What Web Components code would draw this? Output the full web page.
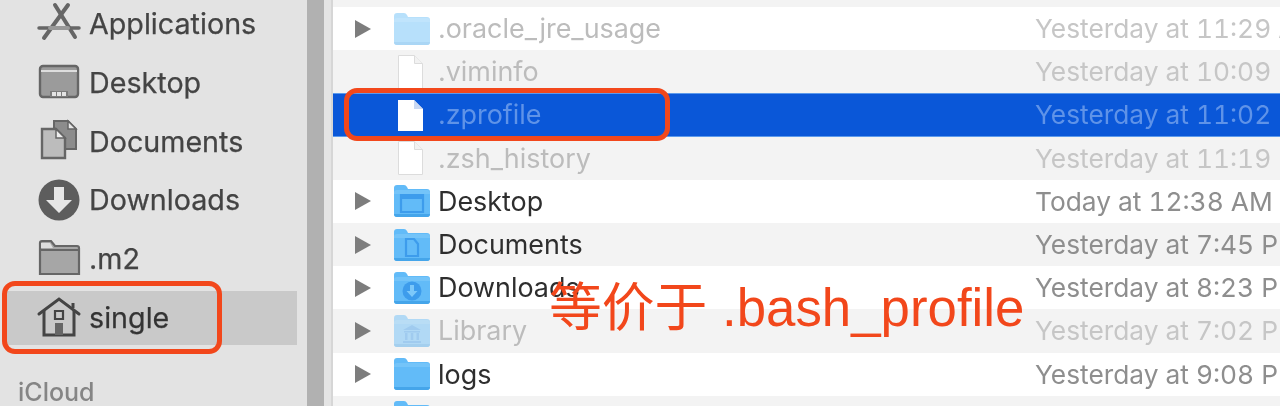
<!DOCTYPE html>
<html>
<head>
<meta charset="utf-8">
<style>
  html, body { margin: 0; height: 406px; overflow: hidden; background: #fff; }
</style>
</head>
<body>
<finder-window>
  <finder-sidebar slot="side">
    <side-item icon="apps">Applications</side-item>
    <side-item icon="desktop">Desktop</side-item>
    <side-item icon="docs">Documents</side-item>
    <side-item icon="down">Downloads</side-item>
    <side-item icon="folder">.m2</side-item>
    <side-item icon="home" selected>single</side-item>
    <span slot="section">iCloud</span>
  </finder-sidebar>
  <file-list slot="list">
    <file-row kind="spacer" stripe></file-row>
    <file-row kind="plain" arrow dim>.oracle_jre_usage<span slot="date">Yesterday at 11:29 AM</span></file-row>
    <file-row kind="file" stripe dim>.viminfo<span slot="date">Yesterday at 10:09 PM</span></file-row>
    <file-row kind="file" selected>.zprofile<span slot="date">Yesterday at 11:02 PM</span></file-row>
    <file-row kind="file" stripe dim>.zsh_history<span slot="date">Yesterday at 11:19 PM</span></file-row>
    <file-row kind="desktop" arrow>Desktop<span slot="date">Today at 12:38 AM</span></file-row>
    <file-row kind="docs" arrow stripe>Documents<span slot="date">Yesterday at 7:45 PM</span></file-row>
    <file-row kind="down" arrow>Downloads<span slot="date">Yesterday at 8:23 PM</span></file-row>
    <file-row kind="library" arrow stripe dim>Library<span slot="date">Yesterday at 7:02 PM</span></file-row>
    <file-row kind="plain" arrow>logs<span slot="date">Yesterday at 9:08 PM</span></file-row>
    <file-row kind="plain" stripe></file-row>
  </file-list>
  <note-box slot="notes" style="left:2px;top:281px;width:220px;height:73px"></note-box>
  <note-box slot="notes" style="left:344px;top:88px;width:326px;height:53px"></note-box>
  <note-label slot="notes" style="left:549px;top:278px">等价于 .bash_profile</note-label>
</finder-window>

<script>
const sideIcons = {
  apps: `<g fill="none" stroke="#666" stroke-width="4" stroke-linecap="round"><path d="M31 3 7 36"/><path d="M18 3 38 35"/><path d="M2 26h40" stroke-width="3.5"/><path d="M13 26h18" stroke="#999"/></g>`,
  desktop: `<rect x="3" y="5" width="38" height="31" rx="3" fill="#9b9b9b" stroke="#666" stroke-width="2.4"/><path d="M4 9h36v2H4z" fill="#ddd"/><path d="M13 30h18v6H13z" fill="#7c7c7c"/><path d="M15 31h4v4h-4zM20 31h4v4h-4zM25 31h4v4h-4z" fill="#e4e4e4"/>`,
  docs: `<path d="M17 1h14l8 8v20H17z" fill="#8c8c8c" stroke="#666" stroke-width="2"/><path d="M31 1v8h8z" fill="#e6e6e6" stroke="#666" stroke-width="1.5"/><path d="M5 9h14l9 9v20H5z" fill="#bcbcbc" stroke="#666" stroke-width="2.4"/><path d="M19 9v9h9z" fill="#eee" stroke="#666" stroke-width="1.5"/>`,
  down: `<circle cx="22" cy="22" r="20.5" fill="#5d5d5d"/><path d="M17 9h10v13h8L22 35 9 22h8z" fill="#e6e6e6"/>`,
  folder: `<path d="M3 37V6q0-2 2-2h9l4 5h22q2 0 2 2v26z" fill="#a6a6a6" stroke="#666" stroke-width="2.2"/><path d="M3 13h39" stroke="#666" stroke-width="2"/><path d="M4 6h9l3 5H4z" fill="#dedede"/>`,
  home: `<g fill="none" stroke="#444" stroke-width="3" ><path d="M2 18 22 3l20 15" stroke-linecap="round"/><path d="M36 12V7"/><path d="M7 15v24h30V15"/><path d="M18 15h8v8h-8z" stroke-width="2.2"/></g><path d="M18 27h8v12h-8z" fill="#666"/>`
};

const folderBody = `<path d="M1 30V4q0-3 3-3h7q2 0 3 2l1 2h19q3 0 3 3v22q0 3-3 3H4q-3 0-3-3z" fill="#62bbf8"/><path d="M1 9q0-3 3-3h30q3 0 3 3v1H1z" fill="#74c4f9"/><path d="M1 30v0q0 3 3 3h30q3 0 3-3v0z" fill="#45a5ea"/>`;
const listIcons = {
  plain: folderBody,
  desktop: folderBody + `<path d="M8 11h22v17H8z" fill="none" stroke="#3d9cec" stroke-width="2.2"/><path d="M8 12h22v3H8z" fill="#3d9cec"/>`,
  docs: folderBody + `<path d="M13 11h8l4 5v12H13z" fill="none" stroke="#3d9cec" stroke-width="2.2"/>`,
  down: folderBody + `<circle cx="19" cy="20" r="9.5" fill="#3d9cec"/><path d="M17 14h4v6h3.500l-5.500 6-5.500-6H17z" fill="#7cc8fa"/>`,
  library: folderBody + `<path d="M19 11l9 5H10zM11 17h16v1.500H11zM12 19h2.500v7H12zM17.800 19h2.500v7h-2.500zM23.500 19H26v7h-2.500zM10 27h18v2H10z" fill="#3d9cec"/>`,
  file: `<path d="M5.500.5h16l8 8v25h-24z" fill="#fff" stroke="#dcdcdc"/><path d="M21.500.5v8h8" fill="#f2f2f2" stroke="#dcdcdc"/>`,
  selected: `<path d="M5 2h16l9 9v22H5z" fill="#fff"/><path d="M21 2v9h9z" fill="#c9d8f2"/>`
};

const windowTemplate = document.createElement("template");
windowTemplate.innerHTML = `
<style>
  :host {
    display: flex;
    position: relative;
    width: 1280px;
    height: 406px;
    overflow: hidden;
    background: #fff;
    font-family: Inter, "Liberation Sans", sans-serif;
    filter: blur(0.55px);
  }
  .gutter { flex: none; width: 17px; background: #b1b1b1; }
  .edge { flex: none; width: 9px; background: linear-gradient(90deg, #e4e4e4 0, #e4e4e4 7px, #d6d6d6 7px); }
</style>
<slot name="side"></slot>
<div class="gutter"></div>
<div class="edge"></div>
<slot name="list"></slot>
<slot name="notes"></slot>
`;
class FinderWindow extends HTMLElement {
  constructor() {
    super();
    this.attachShadow({ mode: "open" });
    this.shadowRoot.appendChild(windowTemplate.content.cloneNode(true));
  }
}

const sidebarTemplate = document.createElement("template");
sidebarTemplate.innerHTML = `
<style>
  :host {
    display: flex;
    flex-direction: column;
    flex: none;
    box-sizing: border-box;
    width: 307px;
    height: 406px;
    padding: 0 10px 0 7px;
    background: #e3e3e3;
    overflow: hidden;
  }
  .items { margin-top: -5.4px; }
  .section {
    padding: 30px 0 0 11px;
    font-size: 25px;
    font-weight: 500;
    color: #858585;
  }
</style>
<div class="items"><slot></slot></div>
<div class="section"><slot name="section"></slot></div>
`;
class FinderSidebar extends HTMLElement {
  constructor() {
    super();
    this.attachShadow({ mode: "open" });
    this.shadowRoot.appendChild(sidebarTemplate.content.cloneNode(true));
  }
}

const sideItemTemplate = document.createElement("template");
sideItemTemplate.innerHTML = `
<style>
  :host {
    display: flex;
    align-items: center;
    gap: 8px;
    height: 58.8px;
    padding-left: 30px;
    font-size: 28.7px;
    color: #444;
    -webkit-text-stroke: 0.25px #444;
  }
  :host([selected]) { background: linear-gradient(transparent 2.5px, #c9c9c9 2.5px, #c9c9c9 56.5px, transparent 56.5px); color: #333; }
  svg { flex: none; width: 44px; height: 44px; overflow: visible; }
  .label { padding-bottom: 1px; }
</style>
<svg viewBox="0 0 44 44"></svg>
<div class="label"><slot></slot></div>
`;
class SideItem extends HTMLElement {
  constructor() {
    super();
    this.attachShadow({ mode: "open" });
    this.shadowRoot.appendChild(sideItemTemplate.content.cloneNode(true));
    this.shadowRoot.querySelector("svg").innerHTML = sideIcons[this.getAttribute("icon")];
  }
}

const fileListTemplate = document.createElement("template");
fileListTemplate.innerHTML = `
<style>
  :host { display: block; flex: 1; min-width: 0; height: 406px; overflow: hidden; }
</style>
<slot></slot>
`;
class FileList extends HTMLElement {
  constructor() {
    super();
    this.attachShadow({ mode: "open" });
    this.shadowRoot.appendChild(fileListTemplate.content.cloneNode(true));
  }
}

const fileRowTemplate = document.createElement("template");
fileRowTemplate.innerHTML = `
<style>
  :host {
    display: grid;
    grid-template-columns: 60px 45px 598px minmax(0, 1fr);
    align-items: center;
    height: 43.2px;
    background: #fff;
    font-size: 26.9px;
    color: #2e2e2e;
    white-space: nowrap;
    overflow: hidden;
  }
  :host([stripe]) { background: #f3f3f3; }
  :host([kind="spacer"]) { height: 7px; }
  :host([dim]) { color: #bcbcbc; }
  :host([selected]) { background: #0a57d8; color: #5f93e8; box-shadow: inset 0 1px #5c9aec, inset 0 -1px #5c9aec; }
  .arrow { width: 16px; height: 18px; margin-left: 22px; }
  svg.icon { width: 38px; height: 34px; display: block; overflow: visible; }
  :host([dim]) svg.folder { opacity: 0.45; }
  .name { padding-bottom: 1px; }
  .date { color: #8e8e8e; font-size: 26.3px; font-variant-numeric: tabular-nums; margin-left: -1px; }
  :host([dim]) .date { color: #c6c6c6; }
  :host([selected]) .date { color: #5f93e8; }
</style>
<svg class="arrow" viewBox="0 0 16 18"><path d="M0 0l16 9L0 18z" fill="#7d7d7d"/></svg>
<svg class="icon" viewBox="0 0 38 34"></svg>
<div class="name"><slot></slot></div>
<div class="date"><slot name="date"></slot></div>
`;
class FileRow extends HTMLElement {
  constructor() {
    super();
    this.attachShadow({ mode: "open" });
    this.shadowRoot.appendChild(fileRowTemplate.content.cloneNode(true));
    const kind = this.getAttribute("kind");
    const icon = this.shadowRoot.querySelector(".icon");
    if (!this.hasAttribute("arrow")) {
      this.shadowRoot.querySelector(".arrow").style.visibility = "hidden";
    }
    if (kind == "spacer") {
      return;
    }
    if (this.hasAttribute("selected")) {
      icon.innerHTML = listIcons.selected;
    } else {
      icon.innerHTML = listIcons[kind];
    }
    if (kind != "file") {
      icon.classList.add("folder");
    }
  }
}

const noteBoxTemplate = document.createElement("template");
noteBoxTemplate.innerHTML = `
<style>
  :host {
    display: block;
    position: absolute;
    box-sizing: border-box;
    border: 5px solid #f2471b;
    border-radius: 13px;
  }
</style>
`;
class NoteBox extends HTMLElement {
  constructor() {
    super();
    this.attachShadow({ mode: "open" });
    this.shadowRoot.appendChild(noteBoxTemplate.content.cloneNode(true));
  }
}

const noteLabelTemplate = document.createElement("template");
noteLabelTemplate.innerHTML = `
<style>
  :host {
    display: block;
    position: absolute;
    font-family: "Liberation Sans", "Noto Sans CJK SC", sans-serif;
    font-size: 52.8px;
    line-height: 60px;
    color: #f2471b;
    white-space: nowrap;
  }
</style>
<slot></slot>
`;
class NoteLabel extends HTMLElement {
  constructor() {
    super();
    this.attachShadow({ mode: "open" });
    this.shadowRoot.appendChild(noteLabelTemplate.content.cloneNode(true));
  }
}

customElements.define("finder-window", FinderWindow);
customElements.define("finder-sidebar", FinderSidebar);
customElements.define("side-item", SideItem);
customElements.define("file-list", FileList);
customElements.define("file-row", FileRow);
customElements.define("note-box", NoteBox);
customElements.define("note-label", NoteLabel);
</script>
</body>
</html>
